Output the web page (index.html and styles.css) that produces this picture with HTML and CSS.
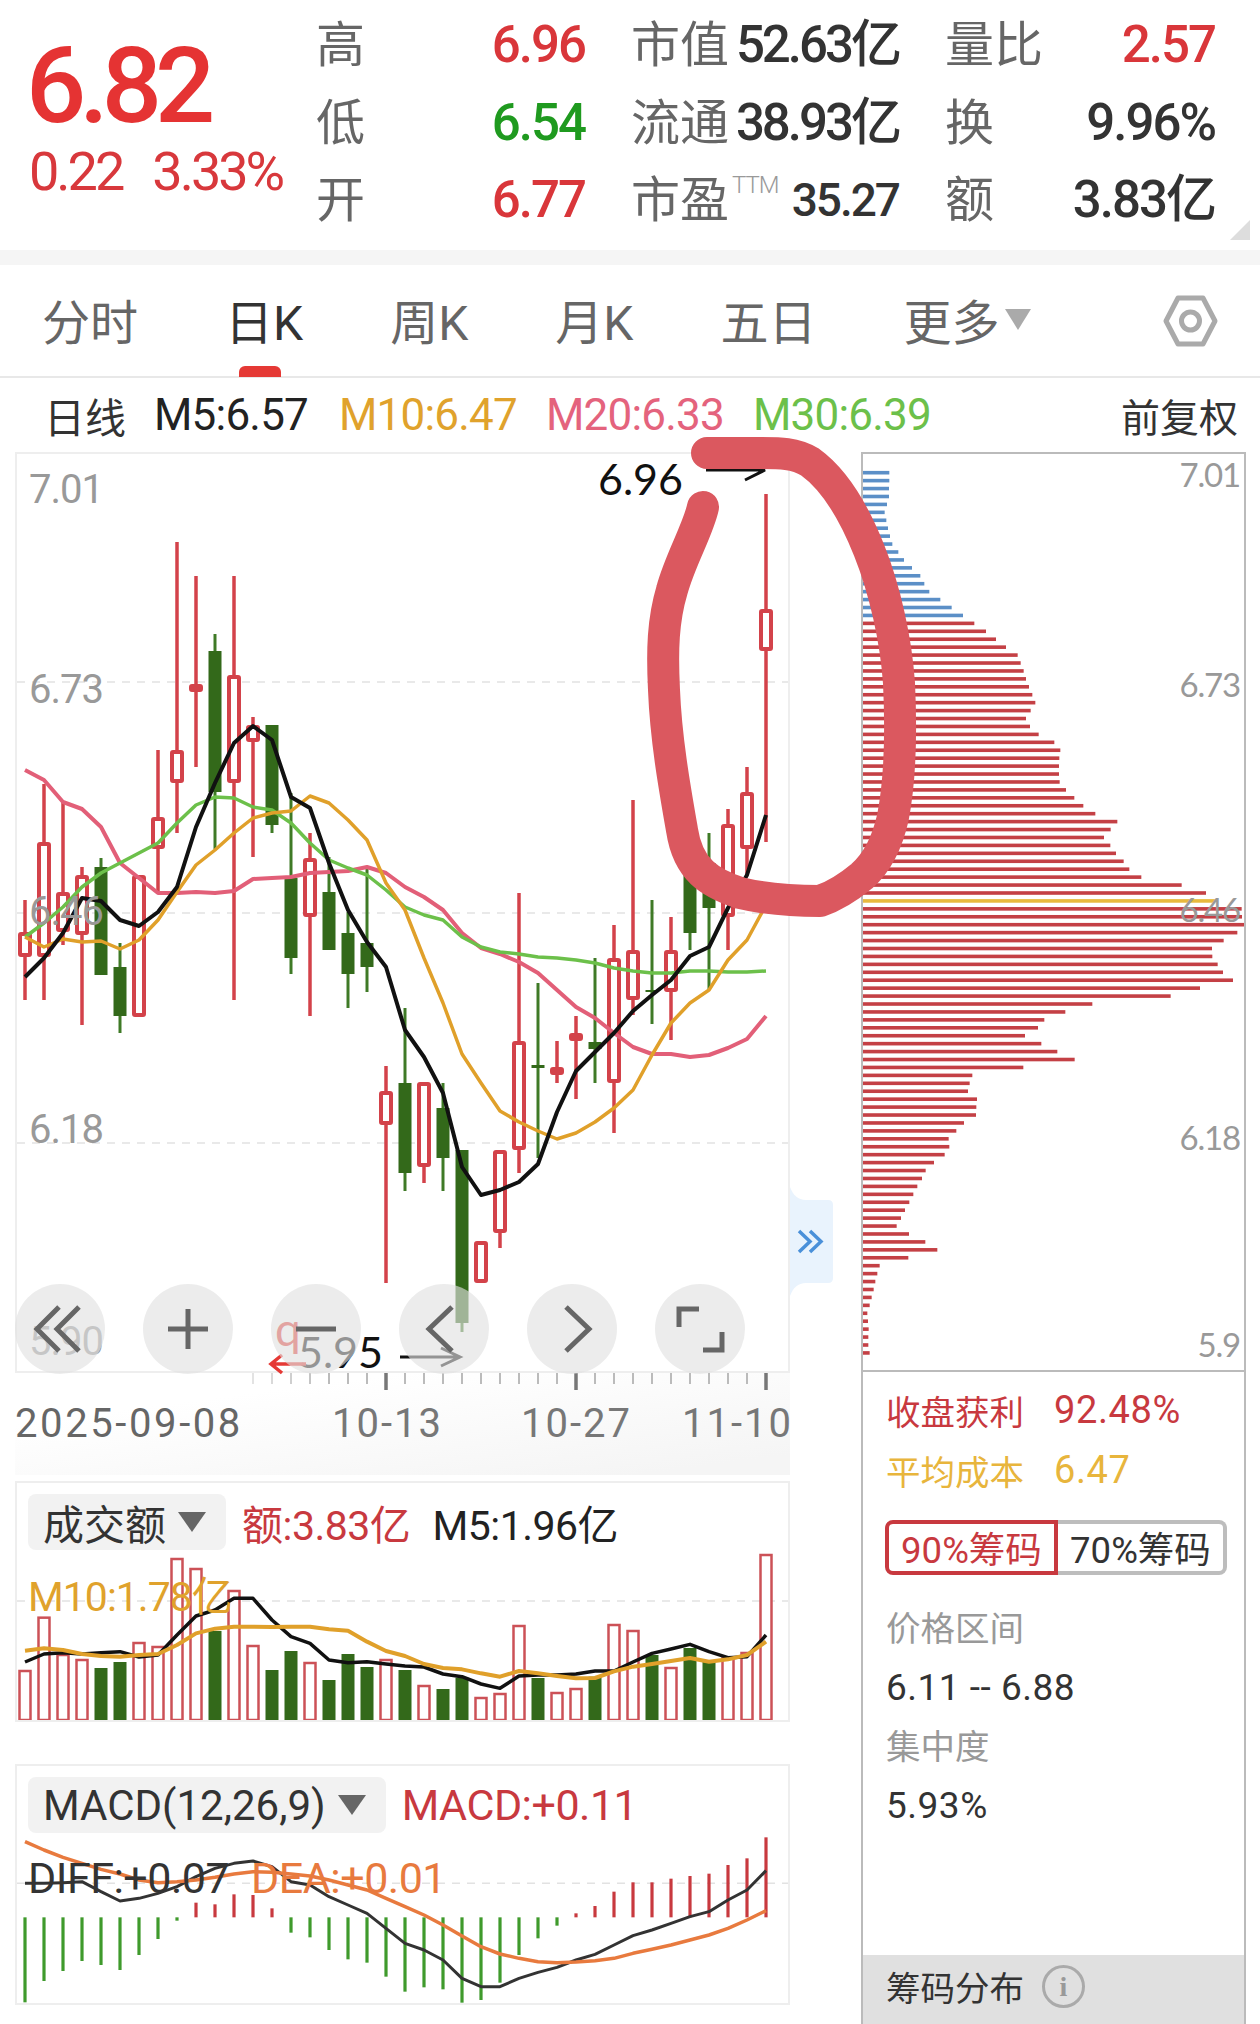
FILE: index.html
```html
<!DOCTYPE html>
<html lang="zh-CN">
<head>
    <meta charset="UTF-8">
    <meta name="viewport" content="width=device-width, initial-scale=1.0">
    <title>日K</title>
    <link rel="stylesheet" href="styles.css">
</head>
<body>

    <header class="quote-bar">
        <div class="quote">
            <div class="price">6.82</div>
            <div class="change"><span>0.22</span><span>3.33%</span></div>
        </div>
        <div class="stats">
            <div class="stat"><span class="stat-name">高</span><span class="stat-val up">6.96</span></div>
            <div class="stat"><span class="stat-name">市值</span><span class="stat-val compact">52.63亿</span></div>
            <div class="stat"><span class="stat-name">量比</span><span class="stat-val up">2.57</span></div>
            <div class="stat"><span class="stat-name">低</span><span class="stat-val down">6.54</span></div>
            <div class="stat"><span class="stat-name">流通</span><span class="stat-val compact">38.93亿</span></div>
            <div class="stat"><span class="stat-name">换</span><span class="stat-val">9.96%</span></div>
            <div class="stat"><span class="stat-name">开</span><span class="stat-val up">6.77</span></div>
            <div class="stat"><span class="stat-name">市盈<sup class="ttm">TTM</sup></span><span class="stat-val narrow">35.27</span></div>
            <div class="stat"><span class="stat-name">额</span><span class="stat-val">3.83亿</span></div>
        </div>
        <span class="corner"></span>
    </header>

    <div class="band"></div>

    <nav class="tabs">
        <a class="tab">分时</a>
        <a class="tab active">日K</a>
        <a class="tab">周K</a>
        <a class="tab">月K</a>
        <a class="tab">五日</a>
        <a class="tab">更多<i class="tab-caret"></i></a>
        <svg class="tab-gear" width="55" height="52" viewBox="1163 295 55 52">
            <path d="M1166 321 L1178 298 H1203 L1215 321 L1203 344 H1178 Z" fill="none" stroke="#aaa" stroke-width="5" stroke-linejoin="round"/>
            <circle cx="1190.5" cy="321" r="9" fill="none" stroke="#aaa" stroke-width="5"/>
        </svg>
    </nav>

    <div class="ma-row">
        <span class="ma-title">日线</span>
        <span class="ma m5">M5:6.57</span>
        <span class="ma m10">M10:6.47</span>
        <span class="ma m20">M20:6.33</span>
        <span class="ma m30">M30:6.39</span>
        <span class="ma-adjust">前复权</span>
    </div>

    <main class="main">
        <section class="chart-col">
            <div class="chart-box">
                <svg id="klineChart" class="kline" viewBox="17 454 771 917"></svg>

                <div class="chart-tools">
                    <button class="tool">
                        <svg viewBox="0 0 90 90"><path d="M44 23 L22 45 L44 67 M64 23 L42 45 L64 67"/></svg>
                    </button>
                    <button class="tool">
                        <svg viewBox="0 0 90 90"><path d="M25 45 H65 M45 25 V65"/></svg>
                    </button>
                    <button class="tool">
                        <svg viewBox="0 0 90 90"><path d="M25 45 H65"/></svg>
                    </button>
                    <button class="tool">
                        <svg viewBox="0 0 90 90"><path d="M53 23 L30 45 L53 67"/></svg>
                    </button>
                    <button class="tool">
                        <svg viewBox="0 0 90 90"><path d="M39 23 L62 45 L39 67"/></svg>
                    </button>
                    <button class="tool">
                        <svg viewBox="0 0 90 90"><path d="M24 43 V25 H44 M48 66 H67 V48"/></svg>
                    </button>
                </div>

                <svg class="side-tab" width="43" height="109" viewBox="0 0 43 109">
                    <path d="M0 0 C3 8 8 13 16 13 H38 Q43 13 43 18 V91 Q43 96 38 96 H16 C8 96 3 101 0 109 Z" fill="#e9f3fd"/>
                    <path d="M9 44 L20 54.5 L9 65 M20 44 L31 54.5 L20 65" fill="none" stroke="#4a90d9" stroke-width="3.5"/>
                </svg>
            </div>

            <div class="axis">
                <svg id="axisTicks" class="axis-ticks" viewBox="15 0 775 20"></svg>
                <div class="axis-dates">
                    <span class="date first">2025-09-08</span>
                    <span class="date">10-13</span>
                    <span class="date">10-27</span>
                    <span class="date">11-10</span>
                </div>
            </div>

            <div class="panel">
                <svg id="volChart" class="panel-chart" viewBox="17 1483 771 237"></svg>
                <div class="panel-head">
                    <div class="panel-line">
                        <span class="picker">成交额<i class="caret"></i></span>
                        <span class="tag red">额:3.83亿</span>
                        <span class="tag ink">M5:1.96亿</span>
                    </div>
                    <div class="panel-line">
                        <span class="tag gold">M10:1.78亿</span>
                    </div>
                </div>
            </div>

            <div class="panel macd">
                <svg id="macdChart" class="panel-chart" viewBox="17 1766 771 237"></svg>
                <div class="panel-head">
                    <div class="panel-line">
                        <span class="picker">MACD(12,26,9)<i class="caret"></i></span>
                        <span class="tag red">MACD:+0.11</span>
                    </div>
                    <div class="panel-line">
                        <span class="tag ink2">DIFF:+0.07</span>
                        <span class="tag orange">DEA:+0.01</span>
                    </div>
                </div>
            </div>
        </section>

        <aside class="chip-col">
            <div class="chip-chart">
                <svg id="chipChart" class="chip-svg" viewBox="863 454 381 916"></svg>
            </div>
            <div class="chip-info">
                <div class="chip-row red"><span>收盘获利</span><span class="chip-num">92.48%</span></div>
                <div class="chip-row amber"><span>平均成本</span><span class="chip-num">6.47</span></div>
                <div class="chip-toggle">
                    <span class="chip-btn on">90%筹码</span>
                    <span class="chip-btn">70%筹码</span>
                </div>
                <div class="chip-label">价格区间</div>
                <div class="chip-value">6.11 -- 6.88</div>
                <div class="chip-label">集中度</div>
                <div class="chip-value">5.93%</div>
            </div>
            <div class="chip-foot">筹码分布<span class="info">i</span></div>
        </aside>
    </main>

    <!-- hand-drawn ring around the last candle -->
    <svg class="scribble" width="1260" height="2024" viewBox="0 0 1260 2024">
        <path d="M703 507 C698 530 680 560 672 590 C663 620 662 650 664 690 C666 740 675 790 682 830 C688 870 710 883 740 893 C765 899 795 901 820 901 C835 896 850 886 862 876 C880 860 889 835 893 817 C901 775 901 725 899 683 C896 640 885 590 869 550 C855 515 835 480 810 462 C795 453 780 453 760 453 L707 453"
              fill="none" stroke="#db585f" stroke-width="32" stroke-linecap="round" stroke-linejoin="round"/>
    </svg>

    <script src="chart.js"></script>
</body>
</html>
```

FILE: styles.css
```css
* {
    box-sizing: border-box;
}

html, body {
    margin: 0;
    height: 2024px;
    overflow: hidden;
}

body {
    position: relative;
    width: 1260px;
    background-color: #ffffff;
    color: #333333;
    font-family: Roboto, "Noto Sans CJK SC", sans-serif;
}

/* Quote header */
.quote-bar {
    position: relative;
    display: flex;
    height: 250px;
}

.quote {
    width: 318px;
    padding: 30px 0 0 26px;
}

.price {
    color: #e53333;
    font-size: 106px;
    font-weight: 500;
    line-height: 112px;
    letter-spacing: -7px;
}

.change {
    display: flex;
    gap: 30px;
    padding-left: 3px;
    color: #d8383c;
    font-size: 54px;
    line-height: 60px;
    letter-spacing: -3px;
}

.stats {
    display: grid;
    grid-template-columns: 269px 268px 270px;
    grid-auto-rows: 77.5px;
    column-gap: 46px;
    padding-top: 4px;
    margin-left: -2px;
}

.stat {
    display: flex;
    justify-content: space-between;
    align-items: center;
}

.stat-name {
    padding-bottom: 4px;
    color: #666666;
    font-size: 49px;
    white-space: nowrap;
}

.ttm {
    position: relative;
    top: 2px;
    margin-left: 3px;
    color: #999999;
    font-size: 24px;
    font-weight: 300;
    letter-spacing: -1px;
    vertical-align: top;
    line-height: 46px;
}

.stat-val {
    padding-top: 5px;
    color: #333333;
    font-size: 51px;
    font-weight: 500;
    line-height: 60px;
    letter-spacing: -2px;
    white-space: nowrap;
}

.stat-val.compact {
    letter-spacing: -3px;
}

.stat-val.narrow {
    font-size: 46px;
    letter-spacing: -2px;
}

.up {
    color: #d9363a;
}

.down {
    color: #1f9a1f;
}

.corner {
    position: absolute;
    right: 10px;
    bottom: 10px;
    width: 20px;
    height: 20px;
    background-color: #dddddd;
    clip-path: polygon(100% 0, 100% 100%, 0 100%);
}

.band {
    height: 15px;
    background-color: #f5f5f5;
}

/* Period tabs */
.tabs {
    position: relative;
    display: flex;
    gap: 87px;
    align-items: center;
    height: 113px;
    padding: 6px 0 0 42px;
    border-bottom: 2px solid #e8e8e8;
}

.tab {
    position: relative;
    display: flex;
    color: #666666;
    font-size: 48px;
    line-height: 60px;
}

.tab.active {
    color: #333333;
}

.tab.active::after {
    content: "";
    position: absolute;
    left: 14px;
    bottom: -23px;
    width: 42px;
    height: 11px;
    border-radius: 6px 6px 0 0;
    background-color: #e53935;
}

.tab-caret {
    width: 0;
    height: 0;
    margin: 15px 0 0 6px;
    border-left: 13px solid transparent;
    border-right: 13px solid transparent;
    border-top: 21px solid #aaaaaa;
}

.tab-gear {
    margin: 0 42px 6px auto;
}

/* Moving average legend */
.ma-row {
    display: flex;
    align-items: center;
    height: 74px;
    padding: 0 22px 0 44px;
    font-size: 44px;
    letter-spacing: -0.8px;
    white-space: nowrap;
}

.ma-title {
    width: 110px;
    font-size: 41px;
    letter-spacing: 0;
}

.ma {
    width: 207px;
}

.m5 {
    width: 185px;
    color: #222222;
}

.m10 {
    color: #e0a22c;
}

.m20 {
    color: #e4637d;
}

.m30 {
    color: #6cc04a;
}

.ma-adjust {
    margin-left: auto;
    font-size: 39px;
    letter-spacing: 0;
}

/* Main two-column area */
.main {
    display: flex;
    gap: 71px;
    padding-left: 15px;
}

.chart-col {
    width: 775px;
}

.chart-box {
    position: relative;
    height: 921px;
    border: 2px solid #eeeeee;
}

.kline {
    display: block;
    width: 771px;
    height: 917px;
    overflow: visible;
}

.chart-tools {
    position: absolute;
    left: -2px;
    bottom: -3px;
    display: flex;
    gap: 38px;
}

.tool {
    width: 90px;
    height: 90px;
    padding: 0;
    border: none;
    border-radius: 50%;
    background-color: rgba(225, 225, 225, 0.63);
}

.tool svg {
    display: block;
}

.tool path {
    fill: none;
    stroke: #666666;
    stroke-width: 5;
}

.side-tab {
    position: absolute;
    left: 773px;
    top: 733px;
}

/* Time axis below the candles */
.axis {
    height: 102px;
    background: linear-gradient(to bottom right, #ffffff 25%, #f5f5f5 90%);
}

.axis-ticks {
    display: block;
    width: 775px;
    height: 20px;
}

.axis-dates {
    display: grid;
    grid-template-columns: 317px 189px 161px 1fr;
    padding-top: 6px;
    color: #777777;
    font-size: 40px;
    line-height: 50px;
    letter-spacing: 2px;
    white-space: nowrap;
}

.date.first {
    color: #666666;
    letter-spacing: 2.6px;
}

/* Indicator panels */
.panel {
    position: relative;
    height: 241px;
    margin-top: 6px;
    border: 2px solid #eeeeee;
}

.panel.macd {
    margin-top: 42px;
}

.panel-chart {
    display: block;
    width: 771px;
    height: 237px;
}

.panel-head {
    position: absolute;
    left: 0;
    right: 0;
    top: 0;
    padding: 11px 0 0 11px;
}

.panel-line {
    display: flex;
    align-items: center;
    height: 56px;
    gap: 16px;
    white-space: nowrap;
}

.panel-line + .panel-line {
    height: 60px;
    margin-top: 13px;
    gap: 22px;
}

.macd .panel-line + .panel-line {
    margin-top: 15px;
}

.panel-line:first-child .tag + .tag {
    margin-left: 6px;
}

.picker {
    display: flex;
    align-items: center;
    height: 56px;
    padding: 0 20px 0 15px;
    border-radius: 8px;
    background-color: #f2f2f2;
    color: #333333;
    font-size: 41px;
}

.macd .picker {
    font-size: 42px;
}

.caret {
    width: 0;
    height: 0;
    margin-left: 12px;
    border-left: 14px solid transparent;
    border-right: 14px solid transparent;
    border-top: 20px solid #666666;
}

.tag {
    font-size: 41px;
    letter-spacing: -0.5px;
}

.macd .tag {
    font-size: 43px;
}

.red {
    color: #c8393f;
}

.ink {
    color: #222222;
}

.ink2 {
    color: #333333;
}

.gold {
    color: #e0a22c;
    letter-spacing: -1px;
}

.orange {
    color: #e87a3e;
}

/* Chip distribution column */
.chip-col {
    display: flex;
    flex-direction: column;
    width: 385px;
    height: 1572px;
    border: 2px solid #bbbbbb;
    border-bottom: none;
}

.chip-chart {
    height: 918px;
    border-bottom: 2px solid #bbbbbb;
}

.chip-svg {
    display: block;
    width: 381px;
    height: 916px;
}

.chip-info {
    padding: 8px 0 0 23px;
    font-size: 34.5px;
}

.chip-row {
    display: flex;
    align-items: center;
    height: 60px;
    gap: 30px;
}

.chip-num {
    font-size: 38px;
    letter-spacing: 0.6px;
}

.amber {
    color: #e8b53c;
}

.chip-toggle {
    display: flex;
    width: 342px;
    height: 55px;
    margin: 20px 0 24px -1px;
}

.chip-btn {
    flex: 1;
    display: flex;
    align-items: center;
    justify-content: center;
    border: 4px solid #bdbdbd;
    border-left: none;
    border-radius: 0 8px 8px 0;
    color: #333333;
    font-size: 36.5px;
    white-space: nowrap;
}

.chip-btn.on {
    border: 4px solid #c8393f;
    border-radius: 8px 0 0 8px;
    color: #c8393f;
}

.chip-label {
    height: 60px;
    line-height: 60px;
    color: #999999;
}

.chip-value {
    height: 58px;
    line-height: 58px;
    color: #333333;
    font-size: 37px;
    letter-spacing: 0.5px;
}

.chip-foot {
    display: flex;
    align-items: center;
    gap: 18px;
    height: 69px;
    margin-top: auto;
    padding: 0 0 7px 23px;
    background-color: #e0e0e0;
    color: #333333;
    font-size: 34.5px;
}

.info {
    width: 43px;
    height: 43px;
    border: 3px solid #aaaaaa;
    border-radius: 50%;
    color: #999999;
    font-family: "Liberation Serif", serif;
    font-size: 28px;
    font-weight: bold;
    line-height: 37px;
    text-align: center;
}

/* Text drawn inside the charts */
.price-label {
    fill: #999999;
    font-size: 40px;
    letter-spacing: -1px;
}

.mark-label {
    fill: #111111;
    font-family: Lato, sans-serif;
    font-size: 43px;
}

.chip-label-svg {
    fill: #999999;
    font-family: Lato, sans-serif;
    font-size: 33px;
    letter-spacing: -1.2px;
    text-anchor: end;
}

.scribble {
    position: absolute;
    left: 0;
    top: 0;
    pointer-events: none;
}
```

FILE: chart.js
```js
const RED = '#d3424a';
const GREEN = '#33691a';
const X = i => 25 + 19 * i;

// high, body top, body bottom, low, direction (screen y of each)
const candles = [
    [900, 932, 957, 1000, 'r'], [784, 842, 957, 1000, 'r'], [802, 892, 932, 945, 'r'], [867, 875, 935, 1025, 'r'],
    [858, 867, 975, 975, 'g'], [943, 967, 1016, 1033, 'g'], [875, 875, 1017, 1017, 'r'], [750, 817, 849, 893, 'r'],
    [542, 750, 783, 833, 'r'], [576, 684, 692, 767, 'r'], [634, 651, 792, 849, 'g'], [576, 675, 783, 1000, 'r'],
    [717, 725, 742, 857, 'r'], [725, 725, 825, 833, 'g'], [793, 878, 958, 974, 'g'], [833, 858, 917, 1016, 'r'],
    [857, 892, 950, 950, 'g'], [912, 933, 974, 1008, 'g'], [868, 943, 967, 992, 'g'], [1066, 1091, 1125, 1283, 'r'],
    [1008, 1083, 1173, 1191, 'g'], [1082, 1082, 1167, 1183, 'r'], [1083, 1108, 1158, 1191, 'g'], [1150, 1150, 1323, 1332, 'g'],
    [1241, 1241, 1283, 1283, 'r'], [1150, 1150, 1233, 1248, 'r'], [893, 1041, 1150, 1173, 'r'], [983, 1065, 1068, 1158, 'g'],
    [1041, 1067, 1075, 1083, 'r'], [1016, 1033, 1041, 1099, 'r'], [958, 1042, 1049, 1083, 'g'], [925, 958, 1083, 1133, 'r'],
    [800, 950, 1000, 1015, 'r'], [900, 990, 992, 1024, 'g'], [917, 950, 992, 1040, 'r'], [875, 875, 933, 950, 'g'],
    [833, 863, 908, 990, 'g'], [809, 824, 917, 950, 'r'], [767, 792, 849, 875, 'r'], [494, 609, 651, 842, 'r']
];

const ma5 = [977, 958, 933, 898, 901, 920, 926, 912, 887, 827, 783, 743, 726, 740, 797, 808, 863, 910, 942, 967, 1030, 1057, 1093, 1167, 1195, 1190, 1182, 1164, 1112, 1071, 1052, 1033, 1011, 995, 980, 956, 947, 908, 875, 815];
const ma10 = [937, 947, 939, 942, 941, 949, 940, 920, 892, 865, 850, 833, 818, 813, 811, 796, 803, 820, 840, 883, 910, 958, 1003, 1054, 1083, 1111, 1122, 1131, 1139, 1133, 1122, 1108, 1090, 1055, 1023, 1003, 990, 960, 940, 905];
const ma20 = [770, 780, 802, 809, 827, 863, 878, 893, 893, 892, 893, 891, 879, 878, 877, 873, 872, 871, 867, 873, 887, 897, 910, 933, 948, 954, 962, 973, 990, 1007, 1018, 1033, 1047, 1054, 1054, 1057, 1055, 1048, 1039, 1016];
const ma30 = [937, 923, 907, 887, 873, 863, 853, 843, 823, 805, 797, 798, 807, 810, 823, 843, 860, 868, 875, 890, 907, 915, 920, 937, 947, 952, 954, 957, 958, 960, 963, 968, 971, 973, 973, 971, 971, 972, 972, 971];

// volume bar tops and averages, thirds of a pixel above the 1470 line
const volTops = [600, 440, 552, 567, 594, 576, 516, 528, 264, 294, 483, 360, 525, 600, 543, 576, 630, 552, 591, 567, 600, 645, 657, 623, 681, 669, 465, 624, 666, 654, 620, 462, 480, 555, 591, 534, 576, 560, 546, 252];
const volDirs = 'rrrrggrrrrgrrggrgggrgrggrrrgrrgrrgrggrrr';
const volM5 = [576, 552, 548, 552, 548, 545, 561, 555, 495, 438, 420, 385, 385, 450, 500, 520, 570, 578, 575, 582, 588, 591, 612, 620, 642, 655, 618, 615, 615, 612, 603, 603, 576, 550, 537, 523, 545, 563, 560, 495];
const volM10 = [542, 535, 540, 552, 558, 560, 555, 552, 525, 490, 476, 470, 470, 471, 470, 470, 478, 482, 515, 543, 558, 582, 594, 598, 610, 620, 603, 610, 618, 625, 624, 604, 590, 582, 573, 564, 575, 568, 555, 515];

// MACD histogram ends and lines, thirds of a pixel below the 1750 line
const macdEnds = [757, 693, 663, 633, 645, 660, 615, 567, 512, 458, 463, 433, 435, 475, 548, 562, 600, 628, 638, 680, 725, 712, 718, 758, 750, 698, 615, 565, 527, 490, 468, 425, 397, 397, 386, 378, 371, 345, 325, 262];
const diff = [400, 400, 398, 395, 425, 453, 445, 430, 410, 380, 355, 340, 333, 350, 395, 405, 440, 465, 490, 535, 580, 600, 630, 685, 710, 710, 685, 667, 652, 630, 613, 585, 557, 540, 520, 500, 485, 450, 420, 362];
const dea = [275, 300, 322, 340, 358, 372, 390, 398, 395, 390, 382, 372, 365, 367, 372, 378, 390, 405, 420, 445, 470, 495, 525, 558, 590, 612, 625, 635, 638, 636, 632, 625, 610, 598, 585, 570, 555, 535, 510, 482];

// right end of each chip row, thirds of a pixel from x = 850
const chipRows = [
    117, 117, 116, 116, 110, 103, 108, 113, 119, 126, 144, 161, 185, 210, 222, 237, 270, 304, 338,
    372, 407, 437, 467, 502, 511, 520, 527, 536, 546, 555, 541, 527, 539, 565, 612, 630, 627, 626, 626, 628, 647, 672, 699, 735, 801, 781, 761, 780, 797, 820, 837, 873, 994, 1067,
    1094,
    1174, 1175, 1185, 1161, 1120, 1085, 1086, 1102, 1118, 1148, 1049, 961, 726, 645, 582, 563, 524, 573, 621, 673, 519, 366, 358, 353, 380, 378, 377, 341, 318, 295, 297, 283, 251, 226, 215, 201, 189, 177, 164, 152, 139, 176, 225, 261, 174, 88, 81, 75, 70, 64, 58, 51, 53, 55, 54, 54, 58
];

function polyline(ys, color, width) {
    const points = ys.map((y, i) => `${X(i)},${y}`).join(' ');
    return `<polyline points="${points}" fill="none" stroke="${color}" stroke-width="${width}" stroke-linejoin="round"/>`;
}

function dashLine(y) {
    return `<line x1="17" x2="788" y1="${y}" y2="${y}" stroke="#e2e2e2" stroke-width="1.5" stroke-dasharray="8 7"/>`;
}

function drawKline() {
    let html = [682, 913, 1143].map(dashLine).join('');

    candles.forEach(([high, top, bottom, low, dir], i) => {
        const x = X(i);
        if (dir === 'r') {
            html += `<line x1="${x}" x2="${x}" y1="${high}" y2="${low}" stroke="${RED}" stroke-width="3.5"/>`;
            html += `<rect x="${x - 5}" y="${top + 2}" width="10" height="${Math.max(bottom - top - 4, 1)}" rx="1" fill="#fff" stroke="${RED}" stroke-width="4"/>`;
        } else {
            html += `<line x1="${x}" x2="${x}" y1="${high}" y2="${low}" stroke="#3f7a26" stroke-width="3"/>`;
            html += `<rect x="${x - 6.5}" y="${top}" width="13" height="${bottom - top}" fill="${GREEN}"/>`;
        }
    });

    html += polyline(ma20, '#e25f78', 4);
    html += polyline(ma30, '#6cc04a', 3.5);
    html += polyline(ma10, '#e0a02a', 3.5);
    html += polyline(ma5, '#111111', 4);

    [['7.01', 503], ['6.73', 703], ['6.46', 925], ['6.18', 1143], ['5.90', 1355]].forEach(([label, y]) => {
        html += `<text class="price-label" x="29" y="${y}">${label}</text>`;
    });

    // highest price marker
    html += '<text class="mark-label" x="598" y="495">6.96</text>';
    html += '<path d="M706 470 H765 L745 480" fill="none" stroke="#111" stroke-width="3"/>';

    // lowest price marker
    html += '<text class="mark-label" x="298" y="1368">5.95</text>';
    html += '<path d="M400 1357 H460 M441 1348 L460 1357 L441 1366" fill="none" stroke="#111" stroke-width="3"/>';
    html += '<text x="275" y="1346" fill="#e53935" font-family="Lato, sans-serif" font-size="46">q</text>';
    html += '<path d="M306 1364 H271 M282 1355 L271 1364 L282 1373" fill="none" stroke="#e53935" stroke-width="3.5"/>';

    document.getElementById('klineChart').innerHTML = html;
}

function drawAxis() {
    let html = '';
    for (let i = 12; i < 40; i++) {
        const x = X(i);
        const major = (i - 19) % 10 === 0;
        const fade = i < 16 ? 0.4 + (i - 12) * 0.15 : 1;
        html += `<line x1="${x}" x2="${x}" y1="0" y2="${major ? 17 : 11}" stroke="${major ? '#777' : '#bbb'}" stroke-width="${major ? 3.5 : 2}" opacity="${fade}"/>`;
    }
    document.getElementById('axisTicks').innerHTML = html;
}

function drawVolume() {
    const y = v => 1470 + v / 3;
    let html = dashLine(1601);

    volTops.forEach((top, i) => {
        const x = X(i);
        const h = 1720 - y(top);
        if (volDirs[i] === 'r') {
            html += `<rect x="${x - 5.5}" y="${y(top) + 1}" width="11" height="${h - 1}" fill="#fff" stroke="#cc5157" stroke-width="2.5"/>`;
        } else {
            html += `<rect x="${x - 6.5}" y="${y(top)}" width="13" height="${h}" fill="${GREEN}"/>`;
        }
    });

    html += polyline(volM5.map(y), '#111111', 3.5);
    html += polyline(volM10.map(y), '#e0a02a', 4);
    document.getElementById('volChart').innerHTML = html;
}

function drawMacd() {
    const y = v => 1750 + v / 3;
    const zero = y(502);
    let html = dashLine(y(400));

    macdEnds.forEach((end, i) => {
        const x = X(i);
        const color = end > 502 ? '#3f9a2c' : '#c8393f';
        html += `<line x1="${x}" x2="${x}" y1="${zero}" y2="${y(end)}" stroke="${color}" stroke-width="3.2"/>`;
    });

    html += polyline(diff.map(y), '#333333', 3);
    html += polyline(dea.map(y), '#e87a3e', 3.5);
    document.getElementById('macdChart').innerHTML = html;
}

function drawChips() {
    let html = '';

    chipRows.forEach((end, i) => {
        const y = 472.7 + 7.93 * i;
        const color = i < 19 ? '#5b8fc7' : (i === 54 ? '#e8b93e' : '#c44045');
        html += `<rect x="862" y="${y - 1.8}" width="${(end - 35) / 3}" height="3.6" fill="${color}"/>`;
    });

    [['7.01', 487], ['6.73', 697], ['6.46', 922], ['6.18', 1150], ['5.9', 1357]].forEach(([label, y]) => {
        html += `<text class="chip-label-svg" x="1240" y="${y}">${label}</text>`;
    });

    document.getElementById('chipChart').innerHTML = html;
}

drawKline();
drawAxis();
drawVolume();
drawMacd();
drawChips();
```
